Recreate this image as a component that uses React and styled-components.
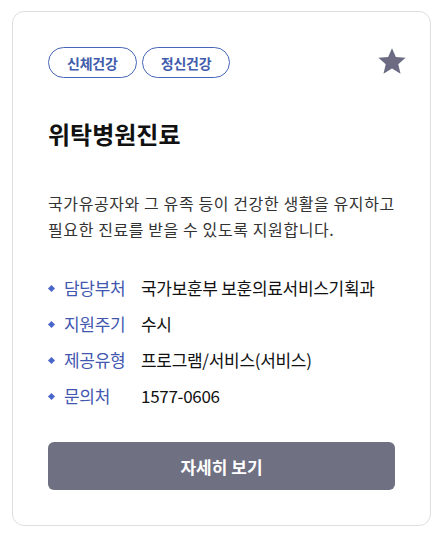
import styled, { createGlobalStyle } from "styled-components";

const GlobalStyle = createGlobalStyle`
  * {
    box-sizing: border-box;
  }

  body {
    margin: 0;
    background: #fff;
    font-family: "Noto Sans CJK KR", "Noto Sans", sans-serif;
  }
`;

const Page = styled.div`
  padding: 11px 12px 12px 12px;
`;

const Card = styled.div`
  width: 419px;
  border: 1px solid #dedede;
  border-radius: 12px;
  background: #fff;
  padding: 35px;
`;

const TopRow = styled.div`
  display: flex;
  align-items: flex-start;
  justify-content: space-between;
  height: 32px;
`;

const Tags = styled.div`
  display: flex;
  gap: 5px;
`;

const Tag = styled.span`
  display: inline-flex;
  align-items: center;
  height: 31px;
  padding: 0 18px;
  border: 1px solid #4766b8;
  border-radius: 16px;
  color: #3f5cad;
  font-size: 14px;
  font-weight: 700;
  letter-spacing: -0.2px;
`;

const StarButton = styled.button`
  border: 0;
  background: none;
  padding: 0;
  margin: -2px -13px 0 0;
  width: 32px;
  height: 32px;
  cursor: pointer;
`;

const Title = styled.h2`
  margin: 39px 0 0 0;
  font-size: 24px;
  font-weight: 700;
  color: #111;
  line-height: 32px;
`;

const Description = styled.p`
  margin: 40px 0 0 0;
  font-size: 16px;
  line-height: 26px;
  color: #333;
  letter-spacing: 0.6px;
  white-space: nowrap;
`;

const InfoList = styled.ul`
  list-style: none;
  margin: 34px 0 0 0;
  padding: 0;
  display: flex;
  flex-direction: column;
  gap: 12px;
`;

const InfoItem = styled.li`
  display: flex;
  align-items: center;
  font-size: 17px;
  line-height: 24px;
  letter-spacing: -0.3px;
`;

const Bullet = styled.span`
  width: 5px;
  height: 5px;
  margin: 0 10px 0 1px;
  background: #4a66c9;
  transform: rotate(45deg);
  flex-shrink: 0;
`;

const Label = styled.span`
  width: 77px;
  flex-shrink: 0;
  color: #4257b0;
`;

const Value = styled.span`
  color: #111;
`;

const DetailButton = styled.button`
  display: block;
  width: 100%;
  height: 48px;
  margin-top: 34px;
  border: 0;
  border-radius: 6px;
  background: #6f7082;
  color: #fff;
  font-family: inherit;
  font-size: 17px;
  font-weight: 700;
  cursor: pointer;
`;

const INFO = [
  { label: "담당부처", value: "국가보훈부 보훈의료서비스기획과" },
  { label: "지원주기", value: "수시" },
  { label: "제공유형", value: "프로그램/서비스(서비스)" },
  { label: "문의처", value: "1577-0606" },
];

const StarIcon = () => (
  <svg width="32" height="32" viewBox="0 0 24 24">
    <path
      d="M12 2.4l2.9 6.6 7.3.6-5.5 4.8 1.7 7.1L12 17.7l-6.4 3.8 1.7-7.1-5.5-4.8 7.3-.6z"
      fill="#6b6c83"
    />
  </svg>
);

export default function App() {
  return (
    <>
      <GlobalStyle />
      <Page>
        <Card>
          <TopRow>
            <Tags>
              <Tag>신체건강</Tag>
              <Tag>정신건강</Tag>
            </Tags>
            <StarButton aria-label="관심 등록">
              <StarIcon />
            </StarButton>
          </TopRow>

          <Title>위탁병원진료</Title>

          <Description>
            국가유공자와 그 유족 등이 건강한 생활을 유지하고
            <br />
            필요한 진료를 받을 수 있도록 지원합니다.
          </Description>

          <InfoList>
            {INFO.map((item) => (
              <InfoItem key={item.label}>
                <Bullet />
                <Label>{item.label}</Label>
                <Value>{item.value}</Value>
              </InfoItem>
            ))}
          </InfoList>

          <DetailButton>자세히 보기</DetailButton>
        </Card>
      </Page>
    </>
  );
}
